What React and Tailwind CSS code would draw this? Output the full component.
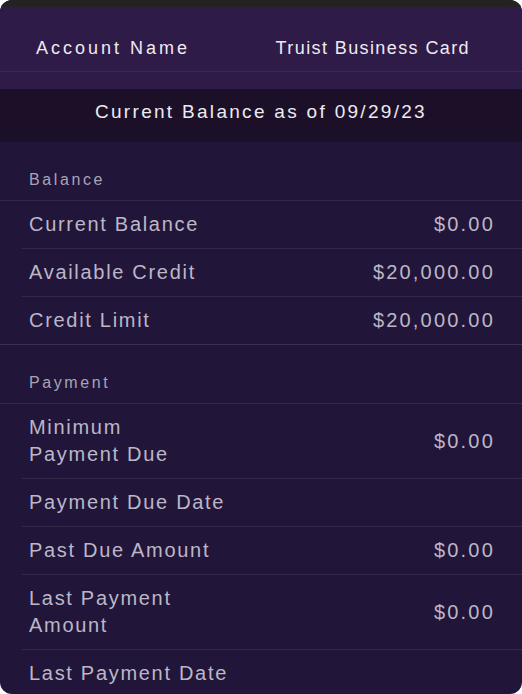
import React from 'react';

const sections = [
  {
    title: 'Balance',
    rows: [
      { label: ['Current Balance'], value: '$0.00' },
      { label: ['Available Credit'], value: '$20,000.00' },
      { label: ['Credit Limit'], value: '$20,000.00' },
    ],
    closed: true,
  },
  {
    title: 'Payment',
    rows: [
      { label: ['Minimum', 'Payment Due'], value: '$0.00' },
      { label: ['Payment Due Date'], value: '' },
      { label: ['Past Due Amount'], value: '$0.00' },
      { label: ['Last Payment', 'Amount'], value: '$0.00' },
      { label: ['Last Payment Date'], value: '' },
    ],
    closed: false,
  },
];

function Row({ row, last }) {
  return (
    <div className={`ml-[22px] flex items-center justify-between py-[10px] pl-[7px] pr-[27px] ${last ? '' : 'border-b border-[#342a48]'}`}>
      <div className="text-[20px] leading-[27px] tracking-[1.7px] text-[#bdb6c7]">
        {row.label.map((l) => (
          <div key={l}>{l}</div>
        ))}
      </div>
      <div className="text-[20px] leading-[27px] tracking-[2.2px] text-[#bdb6c7]">{row.value}</div>
    </div>
  );
}

function Section({ section }) {
  return (
    <div className={section.closed ? 'border-b border-[#3a3050]' : ''}>
      <div className="border-b border-[#342a48] pt-[28px] pb-[10px] pl-[29px] text-[16px] leading-[20px] tracking-[2.6px] text-[#aaa3b5]">
        {section.title}
      </div>
      {section.rows.map((row, i) => (
        <Row key={i} row={row} last={i === section.rows.length - 1} />
      ))}
    </div>
  );
}

export default function App() {
  return (
    <div className="h-[694px] w-[522px] bg-white" style={{ fontFamily: '"Liberation Sans", Arial, sans-serif' }}>
      <div className="flex h-full flex-col overflow-hidden rounded-[12px] bg-[#21163a]">
        <div className="h-[7px] shrink-0 bg-[#232323]" />
        <div className="shrink-0 bg-[#2f1b48]">
          <div className="flex items-center justify-between border-b border-[#3c2856] pt-[28px] pb-[10px] pl-[36px] pr-[52px] text-[18px] leading-[26px] text-[#eeeaf2]">
            <span className="tracking-[3px]">Account Name</span>
            <span className="tracking-[1.4px]">Truist Business Card</span>
          </div>
          <div className="h-[17px]" />
        </div>
        <div className="h-[53px] shrink-0 bg-[#1c1029] pt-[10px] text-center text-[19px] leading-[26px] tracking-[2.3px] text-[#eeeaf2]">
          Current Balance as of 09/29/23
        </div>
        <div className="flex-1 overflow-hidden">
          {sections.map((s) => (
            <Section key={s.title} section={s} />
          ))}
        </div>
      </div>
    </div>
  );
}
